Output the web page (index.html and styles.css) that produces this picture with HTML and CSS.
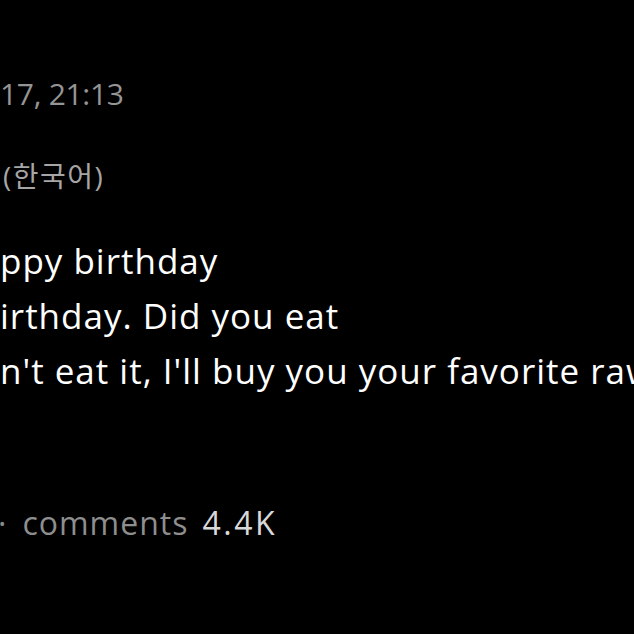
FILE: index.html
```html
<!DOCTYPE html>
<html lang="en">
<head>
  <meta charset="UTF-8">
  <title>Post</title>
  <link rel="stylesheet" href="styles.css">
</head>
<body>
  <div class="post">
    <div class="post-date">17, 21:13</div>
    <div class="post-lang">(한국어)</div>
    <div class="post-body">
      <p class="line">ppy birthday</p>
      <p class="line">irthday. Did you eat</p>
      <p class="line">n't eat it, I'll buy you your favorite raw</p>
    </div>
    <div class="post-meta">
      <span class="dot">·</span>
      <span class="meta-label">comments</span>
      <span class="meta-count">4.4K</span>
    </div>
  </div>
</body>
</html>
```

FILE: styles.css
```css
html, body {
  margin: 0;
  background-color: #000;
  height: 100%;
  overflow: hidden;
}

body {
  font-family: "Open Sans", "Noto Sans CJK KR", sans-serif;
  color: #fff;
}

.post {
  padding-top: 72px;
}

.post-date {
  font-size: 30px;
  line-height: 44px;
  letter-spacing: -0.3px;
  color: #959595;
  white-space: nowrap;
}

.post-lang {
  margin-top: 40px;
  padding-left: 3px;
  font-size: 28px;
  line-height: 40px;
  letter-spacing: 1.5px;
  color: #a6a6a6;
  white-space: nowrap;
}

.post-body {
  margin-top: 37px;
}

.line {
  margin: 0;
  font-size: 35px;
  line-height: 55px;
  letter-spacing: 1px;
  white-space: nowrap;
}

.post-meta {
  margin-top: 105px;
  display: flex;
  align-items: baseline;
  font-size: 32px;
  line-height: 40px;
  letter-spacing: 1px;
  white-space: nowrap;
}

.dot {
  color: #8a8a8a;
  margin-left: -2px;
  margin-right: 15px;
}

.meta-label {
  color: #8e8e8e;
  margin-right: 14px;
}

.meta-count {
  color: #d8d8d8;
  letter-spacing: 2.5px;
}
```
